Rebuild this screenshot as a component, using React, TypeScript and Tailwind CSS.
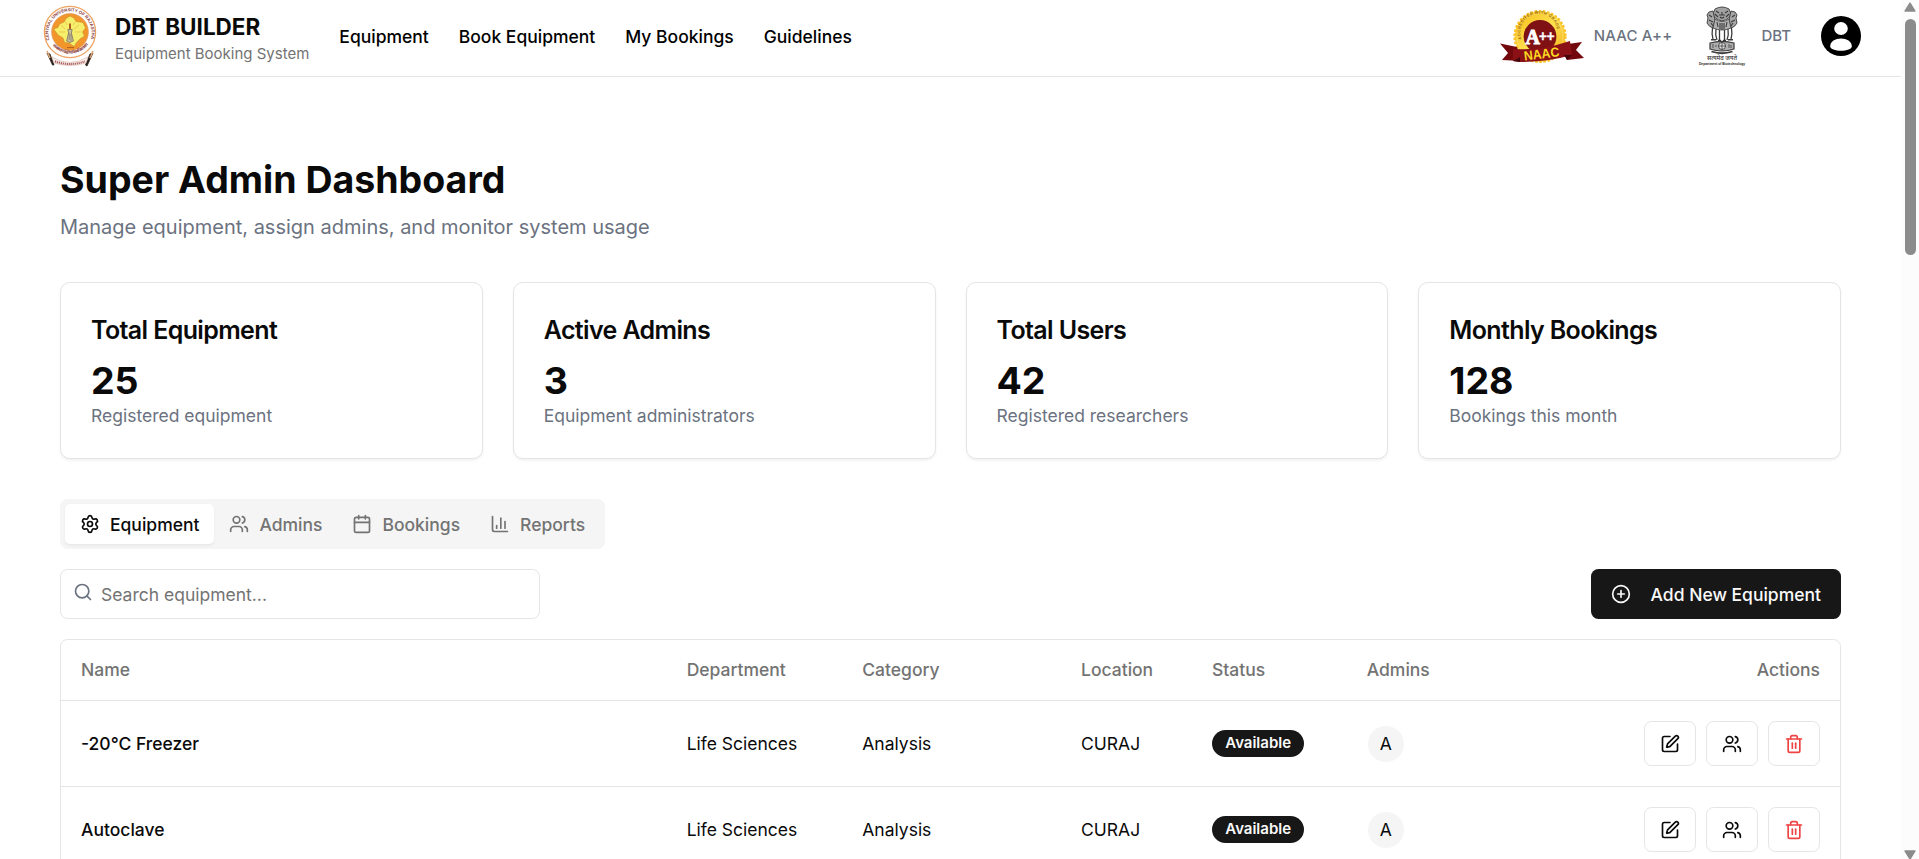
import React from "react";
import {
  Calendar,
  ChartColumn,
  CirclePlus,
  Search,
  Settings,
  SquarePen,
  Trash2,
  Users,
} from "lucide-react";

const stats = [
  { title: "Total Equipment", value: "25", note: "Registered equipment" },
  { title: "Active Admins", value: "3", note: "Equipment administrators" },
  { title: "Total Users", value: "42", note: "Registered researchers" },
  { title: "Monthly Bookings", value: "128", note: "Bookings this month" },
];

const rows = ["-20°C Freezer", "Autoclave"];

function UniversityLogo() {
  return (
    <svg viewBox="0 0 54 62" className="h-[49.6px] w-[43.2px] overflow-visible">
      <defs>
        <path id="ring-top" d="M 6.6 35 A 21.6 21.6 0 1 1 47.4 35" />
        <path id="ring-bottom" d="M 7.5 37.5 A 22.6 22.6 0 0 0 46.5 37.5" />
      </defs>
      <path d="M4 48 L9.5 60 L11 60 L7 49 Z M50 48 L44 61 L42.5 60 L47 49 Z" fill="#2b211c" stroke="#2b211c" strokeWidth="0.8" />
      <path d="M4 46 L7 53 M50 46 L47 53" stroke="#e0a877" strokeWidth="1.6" />
      <path d="M9 52 Q27 63 45 52 L43 58 Q27 63 11 58 Z" fill="#fbf1ee" stroke="#d3b0a6" strokeWidth="0.6" />
      <path d="M12 56.3 Q27 61.8 42 56.3" fill="none" stroke="#a85a5a" strokeWidth="2" strokeDasharray="1.2 0.8" />
      <circle cx="27" cy="27" r="25.6" fill="#fff" stroke="#eda260" strokeWidth="1.3" />
      <circle cx="27" cy="27" r="18.4" fill="#f2962c" stroke="#dd9a62" strokeWidth="0.7" />
      <text fontSize="4.4" fontWeight="700" fill="#8b3b3b" fontFamily="Liberation Sans, sans-serif">
        <textPath href="#ring-top" textLength="84" lengthAdjust="spacingAndGlyphs">CENTRAL UNIVERSITY OF RAJASTHAN</textPath>
      </text>
      <text fontSize="4.2" fontWeight="700" fill="#8b3b3b" fontFamily="Noto Sans, sans-serif">
        <textPath href="#ring-bottom" startOffset="3" textLength="41">राजस्थान केंद्रीय विश्वविद्यालय</textPath>
      </text>
      <path
        d="M27 11 L31 13 L33 16.5 L40 17.5 L42.5 23 L39.5 27 L41.5 31 L37 34 L34 37 L31 41.5 L26 38 L21.5 37.5 L20 33 L15 30 L12.5 26.5 L10.5 24 L15 22.5 L16.5 19 L21 17 L23 13.5 Z"
        fill="#f6ef6c"
        stroke="#c98b22"
        strokeWidth="0.6"
      />
      <path d="M18 20 L22 24 M36 20 L31 24 M16 27 H22 M38 27 H32 M22 16 L24 20 M32 17 L30 20" stroke="#ecb64a" strokeWidth="0.7" />
      <path d="M27 18.5 V24" stroke="#b5601f" strokeWidth="2" />
      <path d="M24.8 24.5 H29.2 L28.4 28 L30.4 36 L27 37.5 L23.6 36 L25.6 28 Z" fill="#c9c0a2" stroke="#6e664f" strokeWidth="0.7" />
      <path d="M26.2 28 V35 M28 29 V36" stroke="#5d5542" strokeWidth="0.5" />
      <path d="M24 42.6 H31" stroke="#b05d1d" strokeWidth="1" />
    </svg>
  );
}

function NaacBadge() {
  return (
    <svg viewBox="0 0 84 56" className="mt-[1.6px] h-[44.8px] w-[67.2px] overflow-visible">
      <defs>
        <linearGradient id="gold" x1="0" y1="0" x2="1" y2="1">
          <stop offset="0" stopColor="#f9b916" />
          <stop offset="0.5" stopColor="#fde04f" />
          <stop offset="1" stopColor="#f3a712" />
        </linearGradient>
        <path id="naac-arc" d="M 22.4 32 A 18.6 18.6 0 1 1 57.4 24" />
      </defs>
      <circle cx="40" cy="27.5" r="25.2" fill="url(#gold)" />
      <circle cx="40" cy="27.5" r="25.4" fill="none" stroke="#fbc326" strokeWidth="2.4" strokeDasharray="2.6 1.6" />
      <circle cx="40" cy="27.5" r="23" fill="none" stroke="#fbe27a" strokeWidth="0.6" />
      <circle cx="40" cy="27.5" r="16.4" fill="#7f1014" />
      <text fontSize="4" fontWeight="700" fill="#9a6a12" fontFamily="Liberation Sans, sans-serif">
        <textPath href="#naac-arc" startOffset="2" textLength="62">ACCREDITED WITH GRADE</textPath>
      </text>
      <path d="M0 34.5 L17 38 L22 52 L2 51 L8 44 Z" fill="#74090d" />
      <path d="M84 49 L67 51 L61 36 L82 33 L76 41 Z" fill="#74090d" />
      <path d="M13 40 Q40 42 70 32 L72 46 Q48 53 20 53 L13 52 Z" fill="#8c1116" />
      <path d="M20 53 L13 52 L20 48 Z M72 46 L64 46 L67 51 Z" fill="#45060a" />
      <text x="25.6" y="35" fontSize="20" fontWeight="700" fill="#fff" stroke="#fff" strokeWidth="0.9" fontFamily="Liberation Serif, serif">
        A<tspan x="39" y="32" fontSize="15" fontFamily="Liberation Sans, sans-serif" strokeWidth="0.4" textLength="15.5" lengthAdjust="spacingAndGlyphs">++</tspan>
      </text>
      <text x="24.5" y="51.6" fontSize="13.2" fontWeight="700" fill="#fdd921" fontFamily="Liberation Sans, sans-serif" textLength="35.5" lengthAdjust="spacingAndGlyphs" transform="rotate(-7 24.5 51.6)">NAAC</text>
    </svg>
  );
}

function NationalEmblem() {
  return (
    <svg viewBox="0 0 48 60" className="h-12 w-[38.4px] overflow-visible" fill="none" stroke="#3a3a3a">
      <path d="M17 3 Q24 -1 31 3 L33 8 Q32 13 24 15 Q16 13 15 8 Z" fill="#a2a2a2" strokeWidth="0.9" />
      <path d="M15 5 Q10 5 9 9 L10 12 L9 17 Q11 21 15 22 L17 14 Z M33 5 Q38 5 39 9 L38 12 L39 17 Q37 21 33 22 L31 14 Z" fill="#a6a6a6" strokeWidth="0.9" />
      <path d="M17 13 Q24 18 31 13 L33 22 Q24 26 15 22 Z" fill="#b0b0b0" strokeWidth="0.8" />
      <path d="M18 5 L21 7 M30 5 L27 7 M21 9 H27 M22 11 Q24 13 26 11 M24 6 V9 M17 8 L20 11 M31 8 L28 11 M11 9 L14 11 M37 9 L34 11 M11 14 L15 16 M37 14 L33 16 M19 16 L20 21 M22 17 V23 M24 17 V24 M26 17 V23 M29 16 L28 21 M13 17 L15 20 M35 17 L33 20" strokeWidth="1.1" />
      <path d="M14.5 22 Q13.5 28 15 33 M18 23 Q17 29 19 34 M21.5 24 V34 M26.5 24 V34 M30 23 Q31 29 29 34 M33.5 22 Q34.5 28 33 33" strokeWidth="1.3" />
      <path d="M13 33.8 H18 M20 34.6 H23 M25 34.6 H28 M30 33.8 H35" strokeWidth="1.6" />
      <path d="M12 37 Q24 33.6 36 37 V43 Q24 47 12 43 Z" fill="#b0b0b0" strokeWidth="1.2" />
      <circle cx="24" cy="40" r="3.5" fill="#e4e4e4" strokeWidth="0.9" />
      <path d="M24 36.5 V43.5 M20.5 40 H27.5 M15 38 V42 M17 40 H19 M31 38 V42 M33 39 V42" strokeWidth="0.8" />
      <path d="M13.5 45.5 Q24 49 34.5 45.5" strokeWidth="1.8" />
      <text x="9" y="54.4" fontSize="6.6" fill="#333" stroke="none" fontFamily="Noto Sans, sans-serif" textLength="30" lengthAdjust="spacingAndGlyphs">सत्यमेव जयते</text>
      <text x="1" y="58.8" fontSize="4" fontWeight="700" fill="#222" stroke="none" fontFamily="Liberation Sans, sans-serif" textLength="46" lengthAdjust="spacingAndGlyphs">Department of Biotechnology</text>
    </svg>
  );
}

function ProfileIcon() {
  return (
    <svg viewBox="0 0 40 40" className="size-8">
      <circle cx="20" cy="20" r="20" fill="#000" />
      <ellipse cx="20" cy="12.5" rx="6.8" ry="6.5" fill="#fff" />
      <path d="M9.2 30.2 C9.2 25.4 14.3 22.4 20 22.4 C25.7 22.4 30.8 25.4 30.8 30.2 C30.8 33 25.5 34.7 20 34.7 C14.5 34.7 9.2 33 9.2 30.2 Z" fill="#fff" />
    </svg>
  );
}

function Header() {
  return (
    <header className="flex h-[61.6px] items-center border-b border-[#e5e5e5] pr-8 pb-[3px] pl-[34px]">
      <div className="flex items-center">
        <UniversityLogo />
        <div className="ml-[14.8px] pt-px">
          <div className="text-lg font-bold">DBT BUILDER</div>
          <div className="text-xs text-[#737373]">Equipment Booking System</div>
        </div>
      </div>
      <nav className="ml-6 flex gap-6 text-sm font-medium text-black">
        <a>Equipment</a>
        <a>Book Equipment</a>
        <a>My Bookings</a>
        <a>Guidelines</a>
      </nav>
      <div className="ml-auto flex items-center text-xs font-medium text-[#6b7280]">
        <NaacBadge />
        <span className="ml-2 tracking-[0.01em]">NAAC A++</span>
        <span className="ml-[20.4px]">
          <NationalEmblem />
        </span>
        <span className="mr-6 ml-[12.4px]">DBT</span>
        <ProfileIcon />
      </div>
    </header>
  );
}

function Stats() {
  return (
    <div className="mt-8 grid grid-cols-4 gap-6">
      {stats.map((s) => (
        <div key={s.title} className="rounded-lg border border-[#e5e5e5] bg-white p-6 shadow-[0_1px_2px_0_rgba(0,0,0,0.05)]">
          <h3 className="text-xl font-semibold tracking-tight">{s.title}</h3>
          <p className="mt-2 text-3xl font-bold">{s.value}</p>
          <p className="text-sm text-[#6b7280]">{s.note}</p>
        </div>
      ))}
    </div>
  );
}

function Tabs() {
  return (
    <div className="mt-8 inline-flex h-10 items-center rounded-md bg-[#f5f5f5] p-1 text-sm font-medium text-[#737373]">
      <button className="flex h-8 items-center rounded-sm bg-white px-3 text-[#0a0a0a] shadow-[0_1px_2px_0_rgba(0,0,0,0.05)]">
        <Settings className="mr-2 size-4" />
        Equipment
      </button>
      <button className="flex h-8 items-center px-3">
        <Users className="mr-2 size-4" />
        Admins
      </button>
      <button className="flex h-8 items-center px-3">
        <Calendar className="mr-2 size-4" />
        Bookings
      </button>
      <button className="flex h-8 items-center px-3">
        <ChartColumn className="mr-2 size-4" />
        Reports
      </button>
    </div>
  );
}

function Toolbar() {
  return (
    <div className="mt-4 flex items-center justify-between">
      <div className="relative w-96">
        <Search className="absolute top-2.5 left-2.5 size-4 text-[#6b7280]" />
        <input
          className="block h-10 w-full rounded-md border border-[#e5e5e5] bg-transparent pr-3 pl-8 text-sm placeholder:text-[#737373]"
          placeholder="Search equipment..."
        />
      </div>
      <button className="flex h-10 items-center gap-2 rounded-md bg-[#171717] px-4 text-sm font-medium text-[#fafafa]">
        <CirclePlus className="mr-2 size-4" />
        Add New Equipment
      </button>
    </div>
  );
}

const columns = "grid grid-cols-[484.5px_140.5px_175px_104.8px_123.8px_1fr]";

function EquipmentTable() {
  return (
    <div className="mt-4 rounded-md border border-[#e5e5e5] text-sm">
      <div className={"h-[48.8px] items-center border-b border-[#e5e5e5] pb-px font-medium text-[#737373] " + columns}>
        <div className="px-4">Name</div>
        <div className="px-4">Department</div>
        <div className="px-4">Category</div>
        <div className="px-4">Location</div>
        <div className="px-4">Status</div>
        <div className="flex justify-between px-4">
          <span>Admins</span>
          <span>Actions</span>
        </div>
      </div>
      {rows.map((name) => (
        <div key={name} className={"h-[68.8px] items-center border-b border-[#e5e5e5] " + columns}>
          <div className="px-4 font-medium">{name}</div>
          <div className="px-4">Life Sciences</div>
          <div className="px-4">Analysis</div>
          <div className="px-4">CURAJ</div>
          <div className="flex px-4">
            <span className="rounded-full bg-[#171717] px-[10.6px] pt-[2.6px] pb-[3.4px] text-xs font-semibold text-[#fafafa]">Available</span>
          </div>
          <div className="flex items-center justify-between px-4">
            <span className="ml-[0.8px] flex size-[28.8px] items-center justify-center rounded-full bg-[#f5f5f5]">A</span>
            <div className="flex gap-2">
              <button className="flex h-9 items-center rounded-md border border-[#e5e5e5] px-3">
                <SquarePen className="size-4" />
              </button>
              <button className="flex h-9 items-center rounded-md border border-[#e5e5e5] px-3">
                <Users className="size-4" />
              </button>
              <button className="flex h-9 items-center rounded-md border border-[#e5e5e5] px-3 text-[#ef4444]">
                <Trash2 className="size-4" />
              </button>
            </div>
          </div>
        </div>
      ))}
    </div>
  );
}

function Scrollbar() {
  return (
    <div className="flex h-full w-[18px] flex-col items-center bg-[#fcfcfc]">
      <svg viewBox="0 0 12 10" className="mt-[2px] h-[10px] w-[12px]">
        <path d="M6 1 L11 9 H1 Z" fill="#8b8b8b" stroke="#8b8b8b" strokeWidth="1.4" strokeLinejoin="round" />
      </svg>
      <div className="mt-[7px] h-[236px] w-[11px] rounded-full bg-[#8b8b8b]" />
      <svg viewBox="0 0 12 10" className="mt-auto mb-[-1px] h-[10px] w-[12px]">
        <path d="M6 9 L11 1 H1 Z" fill="#8b8b8b" stroke="#8b8b8b" strokeWidth="1.4" strokeLinejoin="round" />
      </svg>
    </div>
  );
}

export default function App() {
  return (
    <div className="flex h-[859px] w-[1919px] overflow-hidden bg-white">
      <div className="min-w-0 flex-1 overflow-hidden">
        <div className="font-['Inter',sans-serif] text-[#0a0a0a] [zoom:1.25]">
          <Header />
          <main className="px-12 pt-16">
            <h1 className="text-3xl font-bold">Super Admin Dashboard</h1>
            <p className="mt-2 text-base text-[#6b7280]">Manage equipment, assign admins, and monitor system usage</p>
            <Stats />
            <Tabs />
            <Toolbar />
            <EquipmentTable />
          </main>
        </div>
      </div>
      <Scrollbar />
    </div>
  );
}
